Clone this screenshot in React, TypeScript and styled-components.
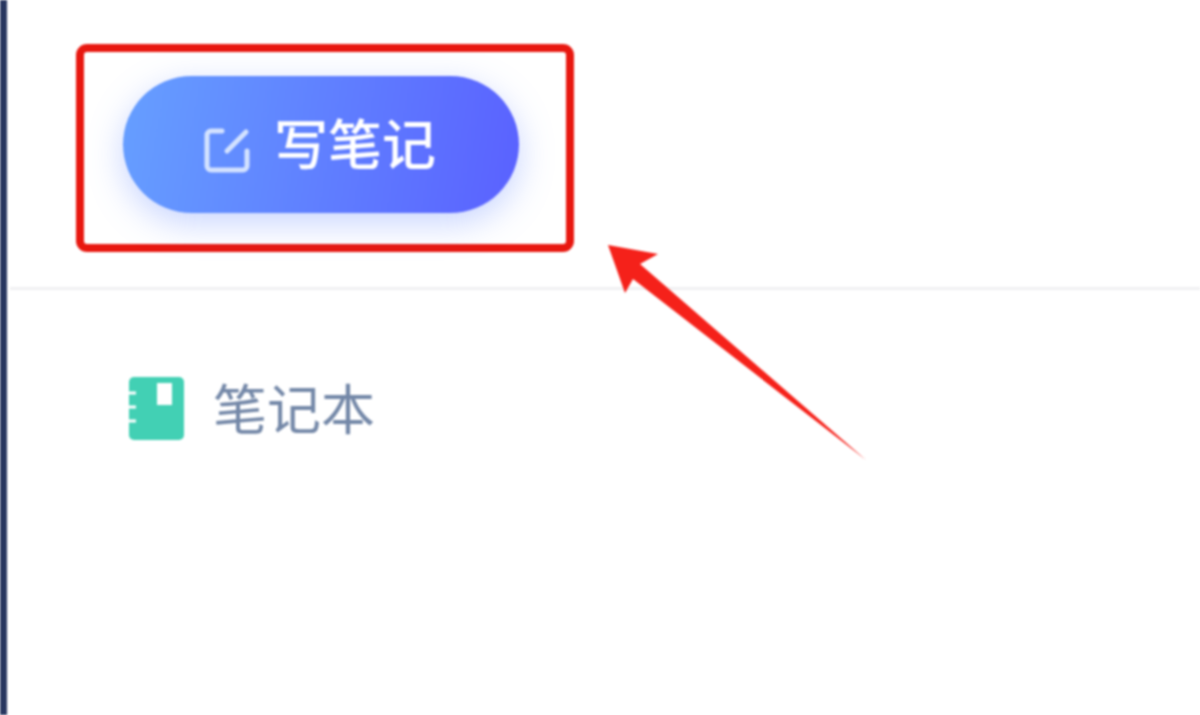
import React from "react";
import styled, { createGlobalStyle } from "styled-components";

const Global = createGlobalStyle`
  html, body { margin: 0; padding: 0; background: #fff; }
  body { font-family: "Noto Sans CJK SC", "Liberation Sans", sans-serif; overflow: hidden; }
`;

const Page = styled.div`
  position: relative;
  display: flex;
  width: 1200px;
  height: 715px;
  overflow: hidden;
  background: #fff;
`;

const Rail = styled.div`
  flex: 0 0 7px;
  background: #27365f;
  filter: blur(0.8px);
`;

const Main = styled.div`
  flex: 1;
  display: flex;
  flex-direction: column;
  padding-left: 3px;
`;

const Toolbar = styled.div`
  box-sizing: border-box;
  height: 290px;
  padding: 44px 0 0 66px;
  border-bottom: 3px solid #f0f0f2;
  filter: blur(1px);
`;

const Highlight = styled.div`
  box-sizing: border-box;
  width: 498px;
  height: 208px;
  padding: 24px 39px;
  border: 8px solid #e8170f;
  border-radius: 11px;
`;

const WriteButton = styled.div`
  box-sizing: border-box;
  width: 396px;
  height: 137px;
  display: flex;
  align-items: center;
  justify-content: center;
  gap: 24px;
  padding-right: 2px;
  border-radius: 69px;
  background: linear-gradient(100deg, #669fff 0%, #5a61ff 100%);
  box-shadow: 0 10px 34px rgba(90, 130, 255, 0.34);
  color: #fff;
  font-size: 54px;
  font-weight: 500;
  line-height: 1;
`;

const Label = styled.span`
  display: block;
  transform: translateY(-3px);
`;

const Notebook = styled.div`
  display: flex;
  align-items: center;
  gap: 29px;
  padding: 87px 0 0 119px;
  color: #7488a8;
  font-size: 54px;
  line-height: 63px;
  filter: blur(1px);
`;

const NotebookLabel = styled.span`
  display: block;
  transform: translateY(-2px);
`;

const EditGlyph = styled.svg`
  margin-top: 10px;
`;

const Arrow = styled.svg`
  position: absolute;
  left: 600px;
  top: 238px;
  filter: blur(1px);
`;

const EditIcon = () => (
  <EditGlyph width="46" height="46" viewBox="0 0 46 46" fill="none" stroke="#d3e2ff" strokeWidth="5" strokeLinecap="round" strokeLinejoin="round">
    <path d="M18 4H7a4 4 0 0 0-4 4v31a4 4 0 0 0 4 4h32a4 4 0 0 0 4-4V24" />
    <path d="M23 24L42 5" />
  </EditGlyph>
);

const NoteIcon = () => (
  <svg width="55" height="63" viewBox="0 0 55 63">
    <rect x="0" y="0" width="55" height="63" rx="5" fill="#42d0b4" />
    <path d="M28 6h15v22h-15z" fill="#fff" />
    <path d="M0 16h7M0 30h7M0 44h7" stroke="#fff" strokeWidth="3" />
  </svg>
);

export default function App() {
  return (
    <Page>
      <Global />
      <Rail />
      <Main>
        <Toolbar>
          <Highlight>
            <WriteButton>
              <EditIcon />
              <Label>写笔记</Label>
            </WriteButton>
          </Highlight>
        </Toolbar>
        <Notebook>
          <NoteIcon />
          <NotebookLabel>笔记本</NotebookLabel>
        </Notebook>
      </Main>
      <Arrow width="280" height="235" viewBox="600 238 280 235">
        <path d="M608 245L658 254L640 264L866 460L633 279L625 293Z" fill="#f5211a" />
      </Arrow>
    </Page>
  );
}
